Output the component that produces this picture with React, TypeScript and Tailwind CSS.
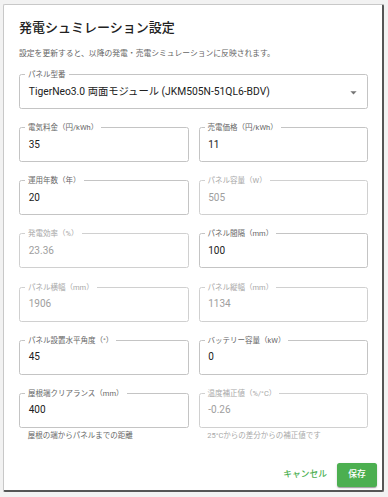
import React from "react";

type FieldProps = {
  label: string;
  value: string;
  disabled?: boolean;
  helper?: string;
};

function Field({ label, value, disabled, helper }: FieldProps) {
  return (
    <div className="flex flex-col">
      <div
        className={`relative h-[35px] rounded-[2.5px] border flex items-center pl-[8.75px] ${
          disabled ? "border-[#d0d0d0]" : "border-[#c4c4c4]"
        }`}
      >
        <span
          className={`absolute left-[5px] top-[-6px] bg-white px-[3px] text-[7.5px] leading-[11px] whitespace-nowrap ${
            disabled ? "text-[#a8a8a8]" : "text-[#666666]"
          }`}
        >
          {label}
        </span>
        <span
          className={`text-[10px] leading-[14px] ${
            disabled ? "text-[#9e9e9e]" : "text-[#212121]"
          }`}
        >
          {value}
        </span>
      </div>
      {helper && (
        <div
          className={`mt-[2px] pl-[8.75px] text-[7.5px] leading-[12.5px] ${
            disabled ? "text-[#a8a8a8]" : "text-[#666666]"
          }`}
        >
          {helper}
        </div>
      )}
    </div>
  );
}

export default function App() {
  const font = {
    fontFamily: "Roboto, 'Noto Sans CJK JP', 'Noto Sans', sans-serif",
  };
  return (
    <div
      className="w-[388px] h-[497px] bg-[#f2f2f2] pt-[4px] pl-[3px] overflow-hidden"
      style={font}
    >
      <div className="w-[381px] bg-white border-l border-t border-[#c8c8c8] border-r-2 border-b-2 border-r-[#555555] border-b-[#555555] rounded-[2px] pl-[15px] pr-[14px] pt-[13px] pb-[3px]">
        <div className="text-[13px] leading-[20px] font-medium text-[#212121]">
          発電シュミレーション設定
        </div>
        <div className="mt-[10px] text-[7.8px] leading-[12px] text-[#666666]">
          設定を更新すると、以降の発電・売電シミュレーションに反映されます。
        </div>
        <div className="mt-[14px] relative h-[35px] rounded-[2.5px] border border-[#c4c4c4] flex items-center pl-[8.75px]">
          <span className="absolute left-[5px] top-[-6px] bg-white px-[3px] text-[7.5px] leading-[11px] text-[#666666]">
            パネル型番
          </span>
          <span className="text-[10.3px] leading-[14px] text-[#212121]">
            TigerNeo3.0 両面モジュール (JKM505N-51QL6-BDV)
          </span>
          <svg
            className="absolute right-[6px] top-[10px]"
            width="15"
            height="15"
            viewBox="0 0 24 24"
          >
            <path d="M7 10l5 5 5-5z" fill="rgba(0,0,0,0.54)" />
          </svg>
        </div>
        <div className="mt-[18px] grid grid-cols-2 gap-x-[10px] gap-y-[18.2px]">
          <Field label="電気料金（円/kWh）" value="35" />
          <Field label="売電価格（円/kWh）" value="11" />
          <Field label="運用年数（年）" value="20" />
          <Field label="パネル容量（W）" value="505" disabled />
          <Field label="発電効率（%）" value="23.36" disabled />
          <Field label="パネル間隔（mm）" value="100" />
          <Field label="パネル横幅（mm）" value="1906" disabled />
          <Field label="パネル縦幅（mm）" value="1134" disabled />
          <Field label="パネル設置水平角度（°）" value="45" />
          <Field label="バッテリー容量（kW）" value="0" />
          <Field
            label="屋根端クリアランス（mm）"
            value="400"
            helper="屋根の端からパネルまでの距離"
          />
          <Field
            label="温度補正値（%/°C）"
            value="-0.26"
            disabled
            helper="25°Cからの差分からの補正値です"
          />
        </div>
        <div className="mt-[20.5px] flex justify-end items-center gap-[5px] -mr-[9px]">
          <button className="h-[24px] min-w-[40px] px-[5px] text-[8.75px] font-medium text-[#4caf50] rounded-[2.5px]">
            キャンセル
          </button>
          <button className="h-[24px] min-w-[40px] px-[10px] text-[8.75px] font-medium text-white bg-[#4caf50] rounded-[2.5px] shadow-[0_2px_1px_-1px_rgba(0,0,0,0.2),0_1px_1px_0_rgba(0,0,0,0.14),0_1px_3px_0_rgba(0,0,0,0.12)]">
            保存
          </button>
        </div>
      </div>
    </div>
  );
}
